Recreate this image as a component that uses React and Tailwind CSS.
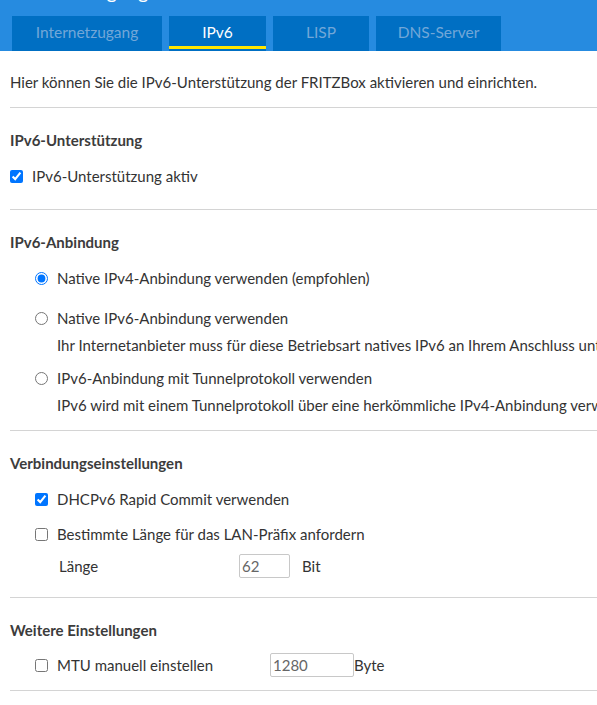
import { useState } from "react";

const tabs = ["Internetzugang", "IPv6", "LISP", "DNS-Server"];
const tabWidths = ["w-[150px]", "w-[97px]", "w-[96px]", "w-[125px]"];

function Section({ title, bottom, children }) {
  return (
    <section className={`border-b border-[#d4d4d4] pt-[22px] ${bottom}`}>
      <h2 className="text-[15px] font-bold leading-[20px] text-[#3c3c3c]">{title}</h2>
      <div className="mt-[16px] flex flex-col">{children}</div>
    </section>
  );
}

function Check({ label, defaultChecked, indent, className = "" }) {
  return (
    <label className={`flex h-[20px] items-center gap-[9px] ${indent ? "pl-[25px]" : ""} ${className}`}>
      <input type="checkbox" defaultChecked={defaultChecked} className="m-0 h-[13px] w-[13px]" />
      <span>{label}</span>
    </label>
  );
}

function Radio({ label, hint, value, current, onPick, className = "" }) {
  return (
    <div className={`pl-[25px] ${className}`}>
      <label className="flex h-[20px] items-center gap-[9px]">
        <input
          type="radio"
          name="anbindung"
          checked={current === value}
          onChange={() => onPick(value)}
          className="m-0 h-[13px] w-[13px]"
        />
        <span>{label}</span>
      </label>
      {hint && <p className="mt-[7px] pl-[22px] leading-[20px]">{hint}</p>}
    </div>
  );
}

export default function App() {
  const [mode, setMode] = useState("native4");

  return (
    <div className="h-[705px] w-[597px] overflow-hidden whitespace-nowrap bg-white font-['Lato',sans-serif] text-[15px] leading-[20px] text-[#333]">
      <header className="flex h-[51px] flex-col bg-[#268be0]">
        <div className="-mt-[19px] pl-[16px] text-[20px] leading-[20px] text-white">Internetzugang</div>
        <nav className="mt-[15px] flex gap-[7px] pl-[12px]">
          {tabs.map((t, i) => (
            <div key={t} className={`flex h-[35px] flex-col bg-[#006fc3] text-[15.5px] ${tabWidths[i]}`}>
              <span
                className={`flex flex-1 items-center justify-center pt-[2px] ${
                  t === "IPv6" ? "text-white" : "text-[#72a7d8]"
                }`}
              >
                {t}
              </span>
              <span className={`mb-[2px] h-[3px] ${t === "IPv6" ? "bg-[#ffe600]" : ""}`} />
            </div>
          ))}
        </nav>
      </header>

      <main className="pl-[10px]">
        <p className="border-b border-[#d4d4d4] pb-[15px] pt-[21px]">
          Hier können Sie die IPv6-Unterstützung der FRITZBox aktivieren und einrichten.
        </p>

        <Section title="IPv6-Unterstützung" bottom="pb-[23px]">
          <Check label="IPv6-Unterstützung aktiv" defaultChecked />
        </Section>

        <Section title="IPv6-Anbindung" bottom="pb-[15px]">
          <Radio label="Native IPv4-Anbindung verwenden (empfohlen)" value="native4" current={mode} onPick={setMode} />
          <Radio
            className="mt-[20px]"
            label="Native IPv6-Anbindung verwenden"
            hint="Ihr Internetanbieter muss für diese Betriebsart natives IPv6 an Ihrem Anschluss unterstützen."
            value="native6"
            current={mode}
            onPick={setMode}
          />
          <Radio
            className="mt-[13px]"
            label="IPv6-Anbindung mit Tunnelprotokoll verwenden"
            hint="IPv6 wird mit einem Tunnelprotokoll über eine herkömmliche IPv4-Anbindung verwendet."
            value="tunnel"
            current={mode}
            onPick={setMode}
          />
        </Section>

        <Section title="Verbindungseinstellungen" bottom="pb-[19px]">
          <Check label="DHCPv6 Rapid Commit verwenden" defaultChecked indent />
          <Check className="mt-[15px]" label="Bestimmte Länge für das LAN-Präfix anfordern" indent />
          <div className="mt-[10px] flex h-[24px] items-center pl-[49px]">
            <span className="w-[180px]">Länge</span>
            <input
              defaultValue="62"
              className="h-[24px] w-[51px] rounded-[2px] border border-[#c8c8c8] px-[2px] text-[#666] outline-none"
            />
            <span className="pl-[12px]">Bit</span>
          </div>
        </Section>

        <Section title="Weitere Einstellungen" bottom="pb-[13px]">
          <div className="-mt-[3px] flex h-[24px] items-center pl-[25px]">
            <label className="flex w-[235px] items-center gap-[9px]">
              <input type="checkbox" className="m-0 h-[13px] w-[13px]" />
              <span>MTU manuell einstellen</span>
            </label>
            <input
              defaultValue="1280"
              className="h-[24px] w-[84px] rounded-[2px] border border-[#c8c8c8] px-[2px] text-[#666] outline-none"
            />
            <span>Byte</span>
          </div>
        </Section>
      </main>
    </div>
  );
}
